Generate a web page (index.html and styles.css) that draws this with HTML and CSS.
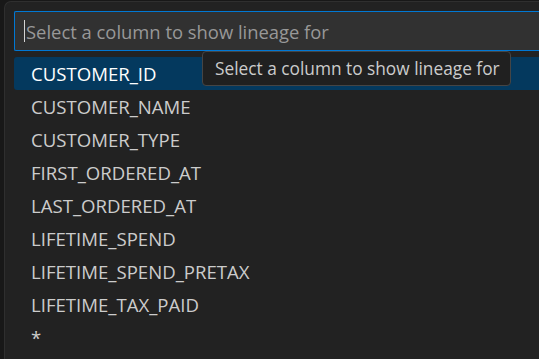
FILE: index.html
```html
<!DOCTYPE html>
<html lang="en">
<head>
  <meta charset="UTF-8">
  <title>Column lineage picker</title>
  <link rel="stylesheet" href="styles.css">
</head>
<body>

  <div class="quick-pick">
    <div class="input-box">
      <span class="caret"></span>
      <span class="placeholder">Select a column to show lineage for</span>
    </div>

    <ul class="options">
      <li class="option active">CUSTOMER_ID</li>
      <li class="option">CUSTOMER_NAME</li>
      <li class="option">CUSTOMER_TYPE</li>
      <li class="option">FIRST_ORDERED_AT</li>
      <li class="option">LAST_ORDERED_AT</li>
      <li class="option">LIFETIME_SPEND</li>
      <li class="option">LIFETIME_SPEND_PRETAX</li>
      <li class="option">LIFETIME_TAX_PAID</li>
      <li class="option">*</li>
    </ul>

    <div class="tooltip">Select a column to show lineage for</div>
  </div>

</body>
</html>
```

FILE: styles.css
```css
:root {
  --bg: #181818;
  --panel: #222222;
  --panel-border: #2f2f2f;
  --input-bg: #313131;
  --focus: #0078d4;
  --active: #04395e;
  --text: #cccccc;
  --muted: #989898;
}

body {
  margin: 0;
  width: 539px;
  height: 359px;
  overflow: hidden;
  background-color: var(--bg);
  font-family: 'Open Sans', 'Noto Sans', sans-serif;
}

.quick-pick {
  position: relative;
  margin: 1px 0 0 4px;
  width: 535px;
  height: 358px;
  overflow: hidden;
  box-sizing: border-box;
  padding: 9px 0 0 9px;
  background-color: var(--panel);
  border: 1px solid var(--panel-border);
  border-right: none;
  border-bottom: none;
  border-radius: 7px 0 0 0;
}

.input-box {
  display: flex;
  align-items: center;
  height: 40px;
  box-sizing: border-box;
  padding-left: 9px;
  background-color: var(--input-bg);
  border: 1px solid var(--focus);
  border-right: none;
  border-radius: 2px 0 0 2px;
}

.caret {
  width: 1px;
  height: 22px;
  margin-right: 1px;
  background-color: #d4d4d4;
}

.placeholder {
  font-size: 18.4px;
  color: var(--muted);
  white-space: nowrap;
}

.options {
  list-style: none;
  margin: 6px 0 0;
  padding: 0;
}

.option {
  height: 33px;
  line-height: 33px;
  padding-left: 17px;
  font-size: 18.6px;
  color: var(--text);
  border-radius: 3px 0 0 3px;
}

.option.active {
  background-color: var(--active);
  color: #ffffff;
}

.tooltip {
  position: absolute;
  left: 197px;
  top: 49px;
  height: 35px;
  line-height: 34px;
  box-sizing: border-box;
  padding: 0 10px 0 12px;
  font-size: 17.3px;
  color: var(--text);
  white-space: nowrap;
  background-color: #202020;
  border: 1px solid #454545;
  border-radius: 4px;
}
```
